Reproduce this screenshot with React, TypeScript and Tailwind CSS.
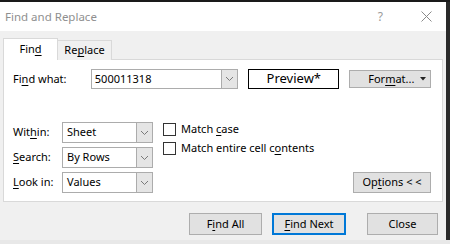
import React from "react";

const U = ({ children }: { children: React.ReactNode }) => <span className="underline underline-offset-[2px] decoration-[1px]">{children}</span>;

const Chevron = () => (
  <svg width="9" height="6" viewBox="0 0 9 6" fill="none">
    <polyline points="1,1 4.5,4.5 8,1" stroke="#7a7a7a" strokeWidth="1" />
  </svg>
);

const Select = ({ value }: { value: string }) => (
  <div className="flex h-[21px] w-[91px] border border-[#acacac] bg-white">
    <div className="flex flex-1 items-center pl-[4px] text-[11px] text-black">{value}</div>
    <div className="flex w-[16px] items-center justify-center border-l border-[#acacac] bg-[#e5e5e5]">
      <Chevron />
    </div>
  </div>
);

const Btn = ({ children, w, primary }: { children: React.ReactNode; w: string; primary?: boolean }) => (
  <div
    className={`flex items-center justify-center bg-[#e1e1e1] text-[11px] text-black ${w} ${
      primary ? "border-2 border-[#0078d7]" : "border border-[#adadad]"
    }`}
  >
    {children}
  </div>
);

const Check = ({ children }: { children: React.ReactNode }) => (
  <div className="flex h-[13px] items-center">
    <div className="h-[13px] w-[13px] border border-[#333] bg-white" />
    <span className="ml-[5px] text-[11px] text-black">{children}</span>
  </div>
);

export default function App() {
  return (
    <div
      className="flex h-[244px] w-[450px] flex-col overflow-hidden bg-[#1a1a1a]"
      style={{ fontFamily: '"Noto Sans", "Open Sans", sans-serif' }}
    >
      <div className="h-[2px] shrink-0" />
      <div className="flex h-[238px] shrink-0">
        <div className="flex w-[446px] flex-col bg-[#f0f0f0]">
          {/* title bar */}
          <div className="flex h-[29px] shrink-0 items-center bg-white pl-[5px] pr-[14px]">
            <span className="text-[11.5px] text-[#8f8f8f]">Find and Replace</span>
            <span className="ml-auto mr-[38px] text-[12px] text-[#9a9a9a]">?</span>
            <svg width="11" height="11" viewBox="0 0 11 11">
              <line x1="0.5" y1="0.5" x2="10.5" y2="10.5" stroke="#8a8a8a" strokeWidth="1" />
              <line x1="10.5" y1="0.5" x2="0.5" y2="10.5" stroke="#8a8a8a" strokeWidth="1" />
            </svg>
          </div>
          {/* body */}
          <div className="flex flex-1 flex-col pl-[3px] pr-[3px] pt-[7px]">
            {/* tabs */}
            <div className="relative z-10 flex h-[22px] items-end">
              <div className="flex h-[22px] w-[55px] items-center justify-center border border-b-0 border-[#d9d9d9] bg-white pb-[1px] text-[11px] text-black">
                <span>
                  Fin<U>d</U>
                </span>
              </div>
              <div className="flex h-[20px] w-[54px] items-center justify-center border border-b-0 border-l-0 border-[#d9d9d9] bg-[#f0f0f0] text-[11px] text-black">
                <span>
                  Re<U>p</U>lace
                </span>
              </div>
            </div>
            {/* panel */}
            <div className="-mt-[1px] flex h-[143px] w-[440px] flex-col border border-[#d9d9d9] bg-white pl-[9px] pr-[11px] pt-[9px]">
              <div className="flex h-[20px] items-center">
                <div className="w-[78px] text-[11px] text-black">
                  Fi<U>n</U>d what:
                </div>
                <div className="flex h-[20px] w-[148px] border border-[#acacac]">
                  <div className="flex flex-1 items-center pl-[3px] text-[11px] text-black">500011318</div>
                  <div className="flex w-[16px] items-center justify-center border-l border-[#acacac] bg-[#e5e5e5]">
                    <Chevron />
                  </div>
                </div>
                <div className="ml-[10px] flex h-[20px] w-[91px] items-center justify-center border border-black text-[13px] text-black">
                  Preview*
                </div>
                <div className="ml-[10px] flex h-[18px] w-[82px] items-center border border-[#adadad] bg-[#e1e1e1] text-[11px] text-black">
                  <span className="ml-[18px]">
                    For<U>m</U>at...
                  </span>
                  <svg className="ml-auto mr-[4px]" width="6" height="4" viewBox="0 0 6 4">
                    <polygon points="0,0 6,0 3,3.5" fill="#222" />
                  </svg>
                </div>
              </div>
              <div className="mt-[33px] flex">
                <div className="flex flex-col gap-[4px]">
                  <div className="flex items-center">
                    <div className="w-[49px] text-[11px] text-black">
                      Wit<U>h</U>in:
                    </div>
                    <Select value="Sheet" />
                  </div>
                  <div className="flex items-center">
                    <div className="w-[49px] text-[11px] text-black">
                      <U>S</U>earch:
                    </div>
                    <Select value="By Rows" />
                  </div>
                  <div className="flex items-center">
                    <div className="w-[49px] text-[11px] text-black">
                      <U>L</U>ook in:
                    </div>
                    <Select value="Values" />
                  </div>
                </div>
                <div className="ml-[10px] flex flex-col gap-[6px] pt-[1px]">
                  <Check>
                    Match <U>c</U>ase
                  </Check>
                  <Check>
                    Match entire cell c<U>o</U>ntents
                  </Check>
                </div>
                <div className="ml-auto flex items-end">
                  <Btn w="w-[78px] h-[21px]">
                    <span>
                      Op<U>t</U>ions &lt; &lt;
                    </span>
                  </Btn>
                </div>
              </div>
            </div>
            {/* bottom buttons */}
            <div className="mt-[11px] flex pr-[5px]">
              <div className="ml-auto flex">
                <Btn w="w-[73px] h-[22px]">
                  <span>
                    F<U>i</U>nd All
                  </span>
                </Btn>
                <div className="ml-[10px]">
                  <Btn w="w-[74px] h-[22px]" primary>
                    <span>
                      <U>F</U>ind Next
                    </span>
                  </Btn>
                </div>
                <div className="ml-[21px]">
                  <Btn w="w-[71px] h-[22px]">Close</Btn>
                </div>
              </div>
            </div>
          </div>
        </div>
        <div className="flex-1 bg-[#2a2a2a]" />
      </div>
      <div className="flex-1 bg-[#e8e8e8]" />
    </div>
  );
}
